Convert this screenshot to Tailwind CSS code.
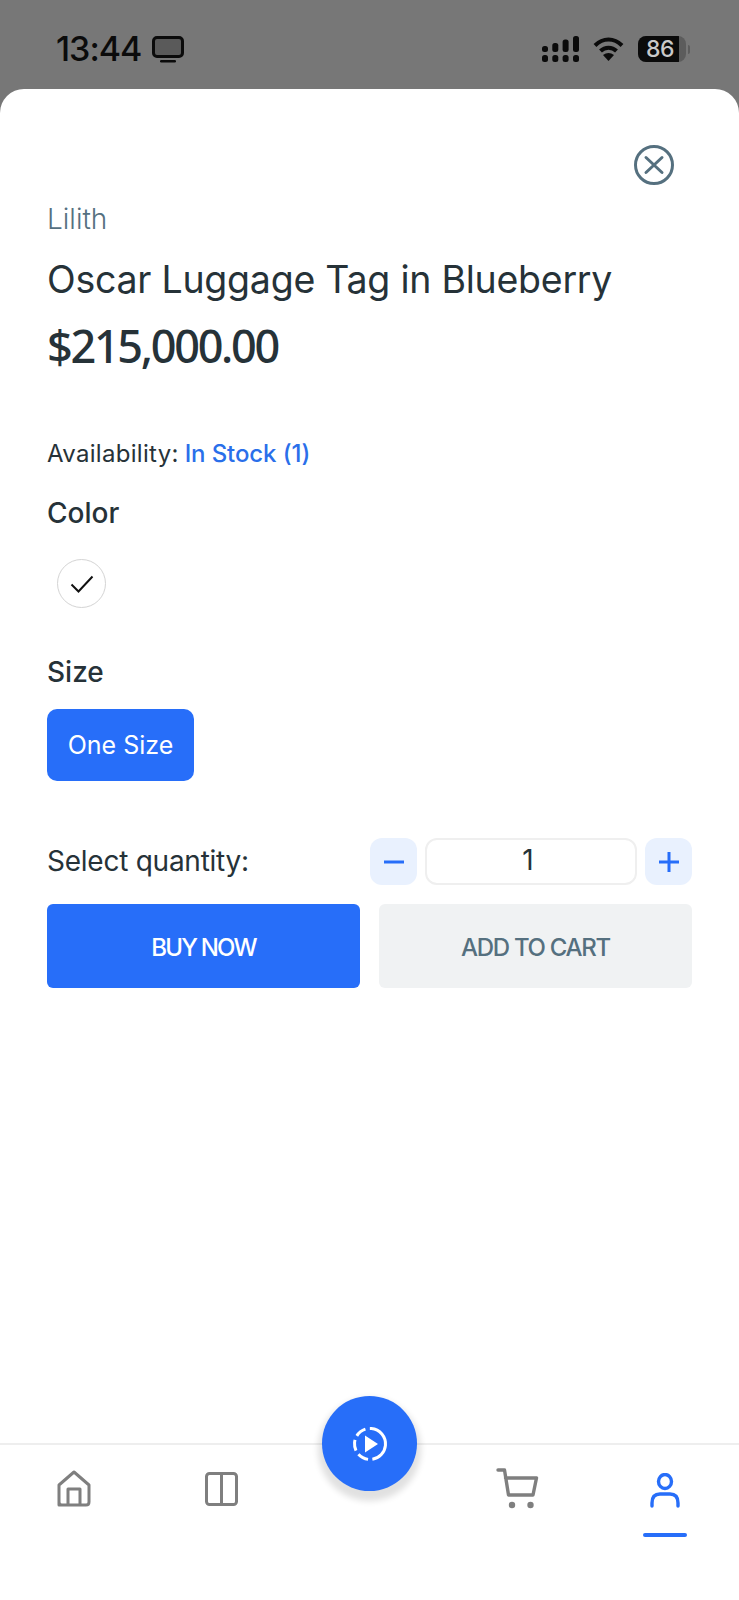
<!DOCTYPE html>
<html><head><meta charset="utf-8"><script src="https://cdn.jsdelivr.net/npm/@tailwindcss/browser@4"></script></head>
<body class="bg-[#777777] font-['Inter','Liberation_Sans',sans-serif]">
<div class="w-[739px] h-[1600px] flex flex-col overflow-hidden">
  <div class="h-[89px] flex items-start justify-between pl-[56px] pr-[49px] pt-[36px] shrink-0">
    <div class="flex items-center gap-[11px] h-[26px]">
      <span class="text-[34px] leading-[26px] font-medium text-[#0b0b0b] tracking-[-1px]">13:44</span>
      <svg width="33" height="27" viewBox="0 0 33 27" fill="none"><rect x="1.5" y="1.5" width="29" height="19" rx="3.5" fill="#5a5a5a" stroke="#0b0b0b" stroke-width="3"/><rect x="8" y="24" width="16" height="2.6" rx="1.3" fill="#0b0b0b"/></svg>
    </div>
    <div class="flex items-center gap-[14px] h-[26px]">
      <svg width="37" height="26" viewBox="0 0 37 26" fill="#0b0b0b"><rect x="0" y="10" width="6" height="6" rx="2.5"/><rect x="10.3" y="7" width="6" height="9" rx="2.5"/><rect x="20.6" y="3.5" width="6" height="12.5" rx="2.5"/><rect x="31" y="0" width="6" height="16" rx="2.5"/><rect x="0" y="19" width="6" height="7" rx="2.5"/><rect x="10.3" y="19" width="6" height="7" rx="2.5"/><rect x="20.6" y="19" width="6" height="7" rx="2.5"/><rect x="31" y="19" width="6" height="7" rx="2.5"/></svg>
      <svg width="31" height="24" viewBox="0 0 31 24" fill="none" stroke="#0b0b0b" stroke-width="4"><path d="M2 8.5C10 0.5 21 0.5 29 8.5"/><path d="M7.5 14C12 9.5 19 9.5 23.5 14"/><path d="M15.5 24L10 18Q15.5 14 21 18Z" fill="#0b0b0b" stroke="none"/></svg>
      <div class="flex items-center">
        <div class="w-[48px] h-[26px] rounded-[8px] overflow-hidden flex bg-[#5c5c5c]">
          <div class="w-[41px] h-full bg-[#0b0b0b] text-[#c9c9c9] text-[23px] leading-[26px] font-medium text-center pl-[3px] tracking-[-0.5px]">86</div>
        </div>
        <div class="w-[2px] h-[9px] ml-[2px] rounded-r-full bg-[#5c5c5c]"></div>
      </div>
    </div>
  </div>
  <div class="flex-1 bg-white rounded-t-[24px] flex flex-col relative">
    <div class="flex-1 px-[47px]">
      <div class="flex justify-end pt-[56px] h-[96px] pr-[18px]">
        <svg width="40" height="40" viewBox="0 0 40 40" fill="none" stroke="#55707f" stroke-width="3"><circle cx="20" cy="20" r="18.5"/><path d="M12 12.5L28 27.5M28 12.5L12 27.5" stroke-linecap="round"/></svg>
      </div>
      <div class="text-[28px] leading-[36px] font-light text-[#55707f] mt-[16px]">Lilith</div>
      <div class="text-[37.5px] leading-[50px] font-normal text-[#263238] mt-[18px] tracking-[-0.25px]">Oscar Luggage Tag in Blueberry</div>
      <div class="text-[45px] leading-[50px] font-medium font-['Noto_Sans',sans-serif] text-[#263238] mt-[16px] tracking-[-2.3px]">$215,000.00</div>
      <div class="text-[24px] leading-[32px] text-[#263238] mt-[67px]"><span class="tracking-[0.3px]">Availability:</span><span class="text-[#2a6fea] font-medium tracking-[-0.1px] ml-[6px]">In Stock (1)</span></div>
      <div class="text-[28px] leading-[36px] font-medium text-[#263238] mt-[25px]">Color</div>
      <div class="w-[49px] h-[49px] ml-[10px] mt-[28px] rounded-full border border-[#d4d4d4] flex items-center justify-center">
        <svg width="24" height="20" viewBox="0 0 24 20" fill="none" stroke="#111111" stroke-width="2"><path d="M1.5 10.5L8.5 17.5L22.5 2.5"/></svg>
      </div>
      <div class="text-[28px] leading-[36px] font-medium text-[#263238] mt-[46px]">Size</div>
      <div class="w-[147px] h-[72px] mt-[19px] pt-[2px] rounded-[10px] bg-[#276ef9] text-white text-[25px] flex items-center justify-center">One Size</div>
      <div class="flex items-center justify-between mt-[57px] h-[47px]">
        <span class="text-[28px] text-[#263238] tracking-[-0.25px] mb-[2px]">Select quantity:</span>
        <div class="flex gap-[8px] items-stretch h-[47px]">
          <div class="w-[47px] rounded-[12px] bg-[#e9f1fe] flex items-center justify-center"><svg width="22" height="22" viewBox="0 0 22 22" fill="none" stroke="#276ef9" stroke-width="3"><path d="M1 11H21"/></svg></div>
          <div class="w-[212px] rounded-[12px] border-2 border-[#efefef] flex items-center justify-center text-[28px] text-[#263238] pr-[6px] pb-[3px]">1</div>
          <div class="w-[47px] rounded-[12px] bg-[#e9f1fe] flex items-center justify-center"><svg width="22" height="22" viewBox="0 0 22 22" fill="none" stroke="#276ef9" stroke-width="3"><path d="M1 11H21M11 1V21"/></svg></div>
        </div>
      </div>
      <div class="flex justify-between mt-[19px]">
        <div class="w-[313px] h-[84px] pt-[3px] rounded-[6px] bg-[#276ef9] text-white text-[24px] font-medium tracking-[-1.8px] flex items-center justify-center">BUY NOW</div>
        <div class="w-[313px] h-[84px] pt-[3px] rounded-[6px] bg-[#f0f2f3] text-[#55707f] text-[24px] font-medium tracking-[-1.3px] flex items-center justify-center">ADD TO CART</div>
      </div>
    </div>
    <div class="h-[157px] border-t-2 border-[#eeeeee] grid grid-cols-5 relative shrink-0">
      <div class="flex justify-center pt-[25px]"><svg width="34" height="37" viewBox="0 0 34 37" fill="none" stroke="#7f7f7f" stroke-width="3" stroke-linejoin="round"><path d="M2 35V15L17 2L32 15V32Q32 35 29 35H5Q2 35 2 32Z"/><path d="M11 35V19H23V35"/></svg></div>
      <div class="flex justify-center pt-[27px]"><svg width="33" height="34" viewBox="0 0 33 34" fill="none" stroke="#7f7f7f" stroke-width="3"><rect x="1.5" y="1.5" width="30" height="31" rx="3"/><path d="M16.5 1.5V32.5"/></svg></div>
      <div></div>
      <div class="flex justify-center pt-[23px]"><svg width="43" height="41" viewBox="0 0 43 41" fill="none" stroke="#7f7f7f" stroke-width="3.4" stroke-linecap="round" stroke-linejoin="round"><path d="M2 2H8.5L12.5 27H37L40.5 10H9.5"/><circle cx="16" cy="37" r="3.2" fill="#7f7f7f" stroke="none"/><circle cx="34.5" cy="37" r="3.2" fill="#7f7f7f" stroke="none"/></svg></div>
      <div class="flex flex-col items-center pt-[28px]">
        <svg width="32" height="35" viewBox="0 0 32 35" fill="none" stroke="#276ef9" stroke-width="3.4" stroke-linecap="round"><ellipse cx="16" cy="8.5" rx="6.5" ry="7"/><path d="M3 33V30Q3 21 11 21H21Q29 21 29 30V33"/></svg>
        <div class="w-[44px] h-[4px] rounded-full bg-[#276ef9] mt-[25px]"></div>
      </div>
      <div class="absolute left-[322px] top-[-49px] w-[95px] h-[95px] rounded-full bg-[#276ef9] shadow-[0_6px_6px_4px_rgba(0,0,0,0.12)] flex items-center justify-center">
        <svg width="36" height="36" viewBox="0 0 36 36" fill="none" stroke="#ffffff" stroke-width="3"><circle cx="18" cy="18" r="15.5" stroke-dasharray="44.6 4.4 11 4.4 11 4.4 11 4.4" transform="rotate(-85 18 18)"/><path d="M13 9.5L26 18L13 26.5Z" fill="#ffffff" stroke="none"/></svg>
      </div>
    </div>
  </div>
</div>
</body></html>
